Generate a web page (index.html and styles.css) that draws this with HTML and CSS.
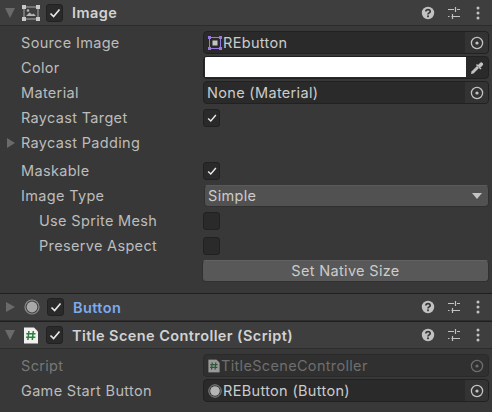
FILE: index.html
```html
<!DOCTYPE html>
<html lang="en">
<head>
<meta charset="utf-8">
<title>Inspector</title>
<link rel="stylesheet" href="styles.css">
</head>
<body>
<svg class="defs" width="0" height="0" aria-hidden="true">
  <symbol id="check" viewBox="0 0 14 14"><path d="M2.5 7.5 5.6 10.5 11.5 3.5" fill="none" stroke="currentColor" stroke-width="1.7"/></symbol>
  <symbol id="help" viewBox="0 0 14 14"><circle cx="7" cy="7" r="6.2" fill="#c2c2c2"/><path d="M4.9 5.5C4.9 3 9.2 3 9.2 5.4 9.2 6.9 7 6.9 7 8.4" fill="none" stroke="#383838" stroke-width="1.7"/><rect x="6.1" y="9.4" width="1.8" height="1.8" fill="#383838"/></symbol>
  <symbol id="sliders" viewBox="0 0 14 14"><path d="M1 3.5H7M10 3.5H13M8.5 1V6M1 10.5H2.5M4.5 10.5H13M5.5 8V13" fill="none" stroke="#c2c2c2" stroke-width="1.2"/></symbol>
  <symbol id="dots" viewBox="0 0 4 14"><circle cx="2" cy="2" r="1.5" fill="#c2c2c2"/><circle cx="2" cy="7" r="1.5" fill="#c2c2c2"/><circle cx="2" cy="12" r="1.5" fill="#c2c2c2"/></symbol>
  <symbol id="target" viewBox="0 0 14 14"><circle cx="7" cy="7" r="5.6" fill="none" stroke="currentColor" stroke-width="1.3"/><circle cx="7" cy="7" r="1.6" fill="currentColor"/></symbol>
  <symbol id="script" viewBox="0 0 15 17"><path d="M0.5 0.5H10.5L14.5 4.5V16.5H0.5Z" fill="#f0f0f0"/><path d="M5.4 4 4.4 13M9.8 4 8.8 13M2.8 6.8H12M2.6 10.2H11.8" fill="none" stroke="#2f7d3a" stroke-width="1.5"/></symbol>
  <symbol id="sprite" viewBox="0 0 14 14"><path d="M2 1.5H12M2 12.5H12M1.5 2V12M12.5 2V12" stroke="#9a78e0" stroke-width="1" fill="none"/><path d="M0 0H3V3H0ZM11 0H14V3H11ZM0 11H3V14H0ZM11 11H14V14H11Z" fill="#9a78e0"/><rect x="4.5" y="4.5" width="5" height="5" fill="#c4c4c4"/></symbol>
</svg>

<section class="component">
  <header class="head head-first">
    <span class="tri tri-down"></span>
    <svg class="comp-icon" width="18" height="16" viewBox="0 0 18 16">
      <path d="M2 2H16M2 14H16M2 2V14M16 2V14" stroke="#a8a8a8" stroke-width="1" fill="none"/>
      <path d="M0 0H4V4H0ZM14 0H18V4H14ZM0 12H4V16H0ZM14 12H18V16H14Z" fill="#c8c8c8"/>
      <path d="M4 11 7.5 7.5 10 9.5 11.5 8.5 14 11Z" fill="#b4b4b4"/><circle cx="6" cy="5.5" r="1.3" fill="#b4b4b4"/>
    </svg>
    <span class="check head-check"><svg width="14" height="14"><use href="#check"/></svg></span>
    <h2 class="title">Image</h2>
    <span class="tools">
      <svg width="14" height="14"><use href="#help"/></svg>
      <svg width="14" height="14"><use href="#sliders"/></svg>
      <svg class="dots" width="4" height="14"><use href="#dots"/></svg>
    </span>
  </header>
  <div class="body body-image">
    <div class="row"><label class="lbl">Source Image</label>
      <div class="field"><svg class="obj" width="14" height="14"><use href="#sprite"/></svg><span class="val">REbutton</span><span class="pick"><svg width="14" height="14"><use href="#target"/></svg></span></div></div>
    <div class="row"><label class="lbl">Color</label>
      <div class="field color"><span class="swatch"></span><span class="drop"><svg width="14" height="14" viewBox="0 0 14 14"><path d="M1 13 1.5 10.5 7 5 9 7 3.5 12.5Z" fill="#c2c2c2"/><path d="M6.5 3.5 8 5 10.5 2.5C11.5 1.5 13.2 3 12 4L9.5 6.5 11 8" stroke="#c2c2c2" stroke-width="1.5" fill="#c2c2c2"/></svg></span></div></div>
    <div class="row"><label class="lbl">Material</label>
      <div class="field"><span class="val val-plain">None (Material)</span><span class="pick"><svg width="14" height="14"><use href="#target"/></svg></span></div></div>
    <div class="row"><label class="lbl">Raycast Target</label><span class="check"><svg width="12" height="12" viewBox="0 0 14 14"><use href="#check"/></svg></span></div>
    <div class="row row-fold"><span class="tri tri-right tri-small"></span><label class="lbl">Raycast Padding</label></div>
    <div class="row"><label class="lbl">Maskable</label><span class="check"><svg width="12" height="12" viewBox="0 0 14 14"><use href="#check"/></svg></span></div>
    <div class="row"><label class="lbl">Image Type</label>
      <div class="select"><span>Simple</span><span class="caret"></span></div></div>
    <div class="row"><label class="lbl sub">Use Sprite Mesh</label><span class="check"></span></div>
    <div class="row"><label class="lbl sub">Preserve Aspect</label><span class="check"></span></div>
    <div class="row row-btn"><button class="btn">Set Native Size</button></div>
  </div>
</section>

<section class="component">
  <header class="head">
    <span class="tri tri-right"></span>
    <svg class="comp-icon" width="18" height="16" viewBox="0 0 18 16"><circle cx="9" cy="8" r="7" fill="none" stroke="#8c8c8c" stroke-width="1.2"/><circle cx="9" cy="8" r="5.4" fill="#a8a8a8"/></svg>
    <span class="check head-check"><svg width="14" height="14"><use href="#check"/></svg></span>
    <h2 class="title title-blue">Button</h2>
    <span class="tools">
      <svg width="14" height="14"><use href="#help"/></svg>
      <svg width="14" height="14"><use href="#sliders"/></svg>
      <svg class="dots" width="4" height="14"><use href="#dots"/></svg>
    </span>
  </header>
</section>

<section class="component last">
  <header class="head">
    <span class="tri tri-down"></span>
    <svg class="comp-icon" width="18" height="17"><use href="#script"/></svg>
    <span class="check head-check"><svg width="14" height="14"><use href="#check"/></svg></span>
    <h2 class="title">Title Scene Controller (Script)</h2>
    <span class="tools">
      <svg width="14" height="14"><use href="#help"/></svg>
      <svg width="14" height="14"><use href="#sliders"/></svg>
      <svg class="dots" width="4" height="14"><use href="#dots"/></svg>
    </span>
  </header>
  <div class="body">
    <div class="row"><label class="lbl dim">Script</label>
      <div class="field disabled"><svg class="obj dim-icon" width="12" height="14" viewBox="0 0 15 17"><use href="#script"/></svg><span class="val">TitleSceneController</span><span class="pick"><svg width="14" height="14"><use href="#target"/></svg></span></div></div>
    <div class="row"><label class="lbl">Game Start Button</label>
      <div class="field"><svg class="obj" width="14" height="14" viewBox="0 0 14 14"><circle cx="7" cy="7" r="6.2" fill="none" stroke="#8c8c8c" stroke-width="1"/><circle cx="7" cy="7" r="4.8" fill="#b4b4b4"/></svg><span class="val">REButton (Button)</span><span class="pick"><svg width="14" height="14"><use href="#target"/></svg></span></div></div>
  </div>
</section>
</body>
</html>
```
FILE: styles.css
```css
* { box-sizing: border-box; }
html, body { margin: 0; padding: 0; }
body {
  width: 492px;
  height: 412px;
  overflow: hidden;
  background: #383838;
  color: #bcbcbc;
  font-family: Inter, "Liberation Sans", sans-serif;
  font-size: 14.5px;
  letter-spacing: 0.33px;
}
.defs { position: absolute; }
.component { border-bottom: 1px solid #1f1f1f; }
.component.last { border-bottom: 0; }
.head {
  height: 27px;
  display: flex;
  align-items: center;
  background: #3e3e3e;
  border-bottom: 1px solid #2c2c2c;
  padding-left: 5px;
  padding-right: 12px;
}
.head-first { height: 26px; }
.tri { width: 0; height: 0; flex: none; }
.tri-down {
  border-left: 5.5px solid transparent;
  border-right: 5.5px solid transparent;
  border-top: 10px solid #6a6a6a;
  margin-right: 7px;
}
.tri-right {
  border-top: 5.5px solid transparent;
  border-bottom: 5.5px solid transparent;
  border-left: 9px solid #6a6a6a;
  margin: 0 8px 0 1px;
}
.tri-small {
  border-top-width: 5px;
  border-bottom-width: 5px;
  border-left-width: 8px;
  margin: 0 6px 0 -14px;
}
.comp-icon { flex: none; margin-right: 6px; color: #c8c8c8; }
.check {
  flex: none;
  width: 17px;
  height: 18px;
  background: #2a2a2a;
  border: 1px solid #212121;
  border-radius: 3px;
  color: #e8e8e8;
  display: flex;
  align-items: center;
  justify-content: center;
}
.head-check { margin-right: 9px; }
.title {
  margin: 0;
  font-size: 14.5px;
  font-weight: 600;
  color: #d2d2d2;
  letter-spacing: 0.42px;
  flex: 1;
  white-space: nowrap;
}
.title-blue { color: #7babf0; }
.tools { display: flex; align-items: center; gap: 12px; flex: none; }
.tools .dots { margin-left: 3px; }
.body { padding: 4px 3px 0 21px; }
.body-image { padding-bottom: 10px; }
.row { height: 25px; display: flex; align-items: center; }
.row-fold { margin-bottom: 3px; }
.row-btn { justify-content: flex-end; }
.lbl { width: 182px; flex: none; white-space: nowrap; }
.lbl.sub { padding-left: 18px; }
.lbl.dim { color: #777; }
.field {
  flex: 1;
  height: 23px;
  display: flex;
  align-items: center;
  background: #2a2a2a;
  border: 1px solid #212121;
  border-radius: 4px;
  color: #cccccc;
  overflow: hidden;
}
.obj { flex: none; margin-left: 4px; margin-right: 1px; }
.val { flex: 1; white-space: nowrap; }
.val-plain { padding-left: 3px; }
.pick {
  flex: none;
  width: 23px;
  height: 100%;
  background: #333;
  display: flex;
  align-items: center;
  justify-content: center;
  color: #c4c4c4;
}
.disabled { background: #303030; border-color: #2a2a2a; color: #6e6e6e; }
.disabled .pick { background: transparent; color: #6e6e6e; }
.dim-icon { opacity: .55; }
.swatch { flex: 1; align-self: stretch; margin: 0 0 1px 1px; background: #fff; }
.drop { flex: none; width: 22px; display: flex; justify-content: center; }
.select {
  flex: 1;
  height: 22px;
  margin-left: 1px;
  display: flex;
  align-items: center;
  justify-content: space-between;
  padding: 0 6px 0 3px;
  background: #515151;
  border: 1px solid #303030;
  border-top-color: #5a5a5a;
  border-radius: 4px;
  color: #cccccc;
}
.caret {
  width: 0; height: 0;
  border-left: 5px solid transparent;
  border-right: 5px solid transparent;
  border-top: 6px solid #c4c4c4;
}
.btn {
  width: 287px;
  height: 22px;
  padding: 0;
  background: #585858;
  border: 1px solid #303030;
  border-top-color: #626262;
  border-radius: 4px;
  color: #cccccc;
  font: inherit;
  letter-spacing: inherit;
}
```
